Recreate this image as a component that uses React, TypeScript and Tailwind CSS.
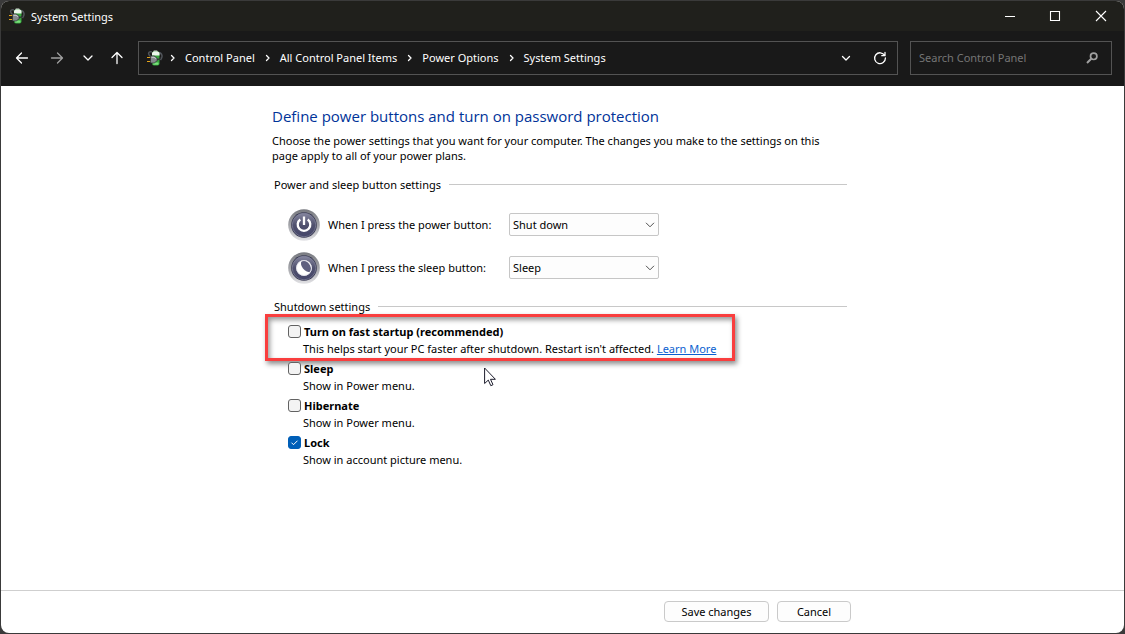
import { useState } from 'react'
import type { ReactNode } from 'react'

const crumbs = ['Control Panel', 'All Control Panel Items', 'Power Options', 'System Settings']

const shutdownItems = [
  { id: 'fast-startup', title: 'Turn on fast startup (recommended)', text: "This helps start your PC faster after shutdown. Restart isn't affected.", link: 'Learn More', on: false },
  { id: 'sleep', title: 'Sleep', text: 'Show in Power menu.', on: false },
  { id: 'hibernate', title: 'Hibernate', text: 'Show in Power menu.', on: false },
  { id: 'lock', title: 'Lock', text: 'Show in account picture menu.', on: true },
]

const PowerIcon = () => (
  <svg viewBox="0 0 16 16" className="w-4 h-4 shrink-0" aria-hidden="true">
    <path d="M4 7C0 4 1.500.8 5 2M11.500 2.500c4 .5 4.500 4.500 2 7.500" fill="none" stroke="#50545a" strokeWidth="1.500" />
    <rect x="6.500" y="0.500" width="4" height="2" rx="0.600" fill="#d7dbd8" />
    <rect x="5" y="1.600" width="7.500" height="13.900" rx="2" fill="#35a63c" />
    <path d="M5 3.600c0-1 .8-2 2-2h3.500c1.200 0 2 1 2 2V5.500H5z" fill="#edf6ed" />
    <path d="M6 12.500h5.500v1.500c0 .5-.4.8-.8.8H6.800c-.4 0-.8-.3-.8-.8z" fill="#7be07c" />
    <path d="M0 7.500h4M0 11.500h4" stroke="#e5a51b" strokeWidth="1.200" />
    <path d="M3.500 6h3.700l3 2.300v2.400l-3 2.300H3.500z" fill="#85898d" stroke="#2b2e31" strokeWidth="0.700" />
    <path d="M4.500 7.300h2.500l2 1.300" fill="none" stroke="#cdd1d4" />
    <path d="M10.200 9.500c1.800 0 2.800-.6 3.600-2" fill="none" stroke="#303336" strokeWidth="1.300" />
  </svg>
)

const ArrowIcon = ({ d, className = '' }: { d: string; className?: string }) => (
  <svg viewBox="0 0 14 14" className={`w-3.5 h-3.5 ${className}`} fill="none" stroke="currentColor" strokeWidth="1.300" strokeLinecap="round" strokeLinejoin="round" aria-hidden="true">
    <path d={d} />
  </svg>
)

const WindowIcon = ({ d }: { d: string }) => (
  <svg viewBox="0 0 14 14" className="w-3.5 h-3.5" fill="none" stroke="currentColor" strokeWidth="1.100" aria-hidden="true">
    <path d={d} />
  </svg>
)

const RoundButtonIcon = ({ id, children }: { id: string; children: ReactNode }) => (
  <svg viewBox="0 0 32 32" className="w-8 h-8 shrink-0" aria-hidden="true">
    <defs>
      <linearGradient id={`${id}-ring`} x1="0" y1="0" x2="0" y2="1">
        <stop offset="0" stopColor="#77797f" />
        <stop offset="0.500" stopColor="#a3a4a9" />
        <stop offset="1" stopColor="#e3e3e6" />
      </linearGradient>
      <linearGradient id={`${id}-face`} x1="0" y1="0" x2="0" y2="1">
        <stop offset="0" stopColor="#85869f" />
        <stop offset="0.500" stopColor="#50516e" />
        <stop offset="1" stopColor="#45466a" />
      </linearGradient>
    </defs>
    <circle cx="16" cy="16" r="15.800" fill={`url(#${id}-ring)`} />
    <circle cx="16" cy="16" r="12.800" fill="#34354f" />
    <circle cx="16" cy="16" r="11.800" fill={`url(#${id}-face)`} stroke="#8f90a8" strokeWidth="0.600" />
    {children}
  </svg>
)

const TitleBar = () => (
  <header className="flex h-[30px] items-center justify-between bg-[#20201c] pl-2 text-white">
    <div className="flex items-center gap-1.5">
      <PowerIcon />
      <h1>System Settings</h1>
    </div>
    <div className="flex">
      <button type="button" aria-label="Minimize" className="flex w-[45px] h-[30px] items-center justify-center">
        <WindowIcon d="M2 7.500h10" />
      </button>
      <button type="button" aria-label="Maximize" className="flex w-[45px] h-[30px] items-center justify-center">
        <WindowIcon d="M2.500 2.500h9v9h-9z" />
      </button>
      <button type="button" aria-label="Close" className="flex w-[47px] h-[30px] items-center justify-center">
        <WindowIcon d="M2 2l10 10M12 2L2 12" />
      </button>
    </div>
  </header>
)

const NavBar = () => (
  <nav className="flex h-[55px] items-center bg-[#191919] pb-0.5 pl-3.5 pr-3 text-white">
    <div className="flex w-[123px] shrink-0 items-center">
      <button type="button" aria-label="Back" className="w-[35px]"><ArrowIcon d="M12.500 7h-11M6.500 2L1.500 7l5 5" /></button>
      <button type="button" aria-label="Forward" className="w-[31px] text-[#a0a0a0]"><ArrowIcon d="M1.500 7h11M7.500 2l5 5-5 5" /></button>
      <button type="button" aria-label="Recent locations" className="w-[29px]"><ArrowIcon d="M3 5l4 4 4-4" /></button>
      <button type="button" aria-label="Up"><ArrowIcon d="M7 12.500v-11M2 6.500l5-5 5 5" /></button>
    </div>
    <div className="flex h-[34px] flex-1 items-center border border-[#535353] pl-2 pr-2.5">
      <PowerIcon />
      <ol className="flex flex-1 items-center">
        {crumbs.map((crumb) => (
          <li key={crumb} className="flex items-center">
            <ArrowIcon d="M5.500 4.500L8 7l-2.500 2.500" className="mx-[3px]" />
            <a href="#" className="whitespace-nowrap pl-0.5 pr-[3px]">{crumb}</a>
          </li>
        ))}
      </ol>
      <button type="button" aria-label="Previous locations" className="mr-5"><ArrowIcon d="M3.500 5.500L7 9l3.500-3.500" /></button>
      <button type="button" aria-label="Refresh">
        <ArrowIcon d="M11.700 4.500A5.400 5.400 0 1 0 12.400 7M12 1.500v3.200H8.800" />
      </button>
    </div>
    <div className="ml-3 flex h-[34px] w-[202px] items-center border border-[#535353] pl-2 pr-3">
      <input type="search" aria-label="Search Control Panel" placeholder="Search Control Panel" className="min-w-0 flex-1 bg-transparent outline-none placeholder:text-[#757575]" />
      <svg viewBox="0 0 14 14" className="w-3.5 h-3.5 text-[#a0a0a0]" fill="none" stroke="currentColor" aria-hidden="true">
        <circle cx="8.700" cy="5.300" r="3.200" strokeWidth="1.700" />
        <path d="M6.200 7.800L2 12" strokeWidth="2" />
      </svg>
    </div>
  </nav>
)

const Legend = ({ children }: { children: ReactNode }) => (
  <div className="flex h-5 items-center gap-2 pl-0.5 pr-1.5">
    <h3>{children}</h3>
    <span className="h-px flex-1 bg-[#c8c8c8]" />
  </div>
)

const ButtonSetting = ({ id, label, value, icon }: { id: string; label: string; value: string; icon: ReactNode }) => (
  <div className="flex h-[43px] items-center pl-4">
    <RoundButtonIcon id={`${id}-icon`}>{icon}</RoundButtonIcon>
    <label htmlFor={id} className="ml-2 w-[181px]">{label}</label>
    <div className="relative">
      <select id={id} defaultValue={value} className="block h-[23px] w-[150px] appearance-none rounded-xs border border-[#c6c6c6] bg-[#fdfdfd] pl-[3px] text-black">
        <option>Do nothing</option>
        <option>Sleep</option>
        <option>Hibernate</option>
        <option>Shut down</option>
      </select>
      <svg viewBox="0 0 10 6" className="pointer-events-none absolute right-1 top-[9px] h-1.5 w-2.5" fill="none" stroke="#505050" aria-hidden="true">
        <path d="M1 0.800l4 4 4-4" />
      </svg>
    </div>
  </div>
)

const App = () => {
  const [checked, setChecked] = useState<Record<string, boolean>>(
    Object.fromEntries(shutdownItems.map((item) => [item.id, item.on])),
  )

  return (
    <div className="min-h-screen bg-[#3a3a3a] p-px font-['Noto_Sans','Open_Sans',sans-serif] text-[11px] leading-[15px] text-black">
      <div className="flex min-h-[calc(100vh-2px)] flex-col overflow-hidden rounded-lg bg-white">
        <TitleBar />
        <NavBar />

        <main className="mx-auto w-full max-w-[581px] flex-1 pt-[19px]">
          <h2 className="font-['Open_Sans','Noto_Sans',sans-serif] text-[15px] leading-[22px] text-[#003399]">
            Define power buttons and turn on password protection
          </h2>
          <p className="mt-1.5 pr-6">
            Choose the power settings that you want for your computer. The changes you make to the settings on this page apply to all of your power plans.
          </p>

          <section className="mt-[11px]">
            <Legend>Power and sleep button settings</Legend>
            <div className="mt-[9px]">
              <ButtonSetting
                id="power"
                label="When I press the power button:"
                value="Shut down"
                icon={
                  <g fill="none" stroke="#fff" strokeWidth="2.300">
                    <path d="M12.300 10.500a6.300 6.300 0 1 0 7.400 0" />
                    <path d="M16 7.500v8.500" />
                  </g>
                }
              />
              <ButtonSetting
                id="sleep-button"
                label="When I press the sleep button:"
                value="Sleep"
                icon={
                  <>
                    <circle cx="16" cy="16" r="7.700" fill="#fff" />
                    <ellipse cx="18" cy="14.200" rx="3.800" ry="6.600" transform="rotate(-38 18 14.200)" fill="#5f6080" />
                    <circle cx="16" cy="16" r="7.500" fill="none" stroke="#e4e4ec" strokeWidth="0.900" />
                  </>
                }
              />
            </div>
          </section>

          <section className="mt-[7px]">
            <Legend>Shutdown settings</Legend>
            <ul className="mt-[7px] space-y-[3px] pl-4">
              {shutdownItems.map((item) => (
                <li key={item.id} className="relative leading-[17px]">
                  <div className="flex items-center gap-[3px]">
                    <span className="relative h-[13px] w-[13px]">
                      <input
                        id={item.id}
                        type="checkbox"
                        checked={checked[item.id]}
                        onChange={(e) => setChecked({ ...checked, [item.id]: e.target.checked })}
                        className="block h-[13px] w-[13px] appearance-none rounded-[3px] border border-[#626262] bg-[#f3f3f3] checked:border-[#005fb8] checked:bg-[#005fb8]"
                      />
                      {checked[item.id] && (
                        <svg viewBox="0 0 13 13" className="pointer-events-none absolute inset-0" fill="none" stroke="#fff" aria-hidden="true">
                          <path d="M3.500 6.700l2 2 4-4" />
                        </svg>
                      )}
                    </span>
                    <label htmlFor={item.id} className="font-bold">{item.title}</label>
                  </div>
                  <p className="pl-[15px]">
                    {item.text}
                    {item.link && <> <a href="#" className="text-[#0a5fd0] underline">{item.link}</a></>}
                  </p>
                  {/* callout drawn over the fast startup option */}
                  {item.id === 'fast-startup' && (
                    <div className="pointer-events-none absolute -left-[23px] -top-[9px] -bottom-1 w-[470px] border-3 border-[#f93e3e] shadow-[2px_3px_5px_rgba(0,0,0,0.45),inset_2px_3px_5px_rgba(0,0,0,0.4)]">
                      <svg viewBox="0 0 12 20" className="absolute left-[216px] top-[50px] h-5 w-3" fill="#fff" stroke="#1c1c2c" aria-hidden="true">
                        <path d="M.6 1v15.500l3.700-3.400 2.500 5.600 2.200-1-2.500-5.400h4.900z" />
                      </svg>
                    </div>
                  )}
                </li>
              ))}
            </ul>
          </section>
        </main>

        <footer className="border-t border-[#cfcfcf]">
          <div className="mx-auto flex w-full max-w-[581px] justify-end gap-2 pb-[11px] pr-0.5 pt-2.5">
            <button type="button" className="h-[21px] w-[105px] rounded-sm border border-[#cacaca] bg-[#fdfdfd]">Save changes</button>
            <button type="button" className="h-[21px] w-[74px] rounded-sm border border-[#cacaca] bg-[#fdfdfd]">Cancel</button>
          </div>
        </footer>
      </div>
    </div>
  )
}

export default App
